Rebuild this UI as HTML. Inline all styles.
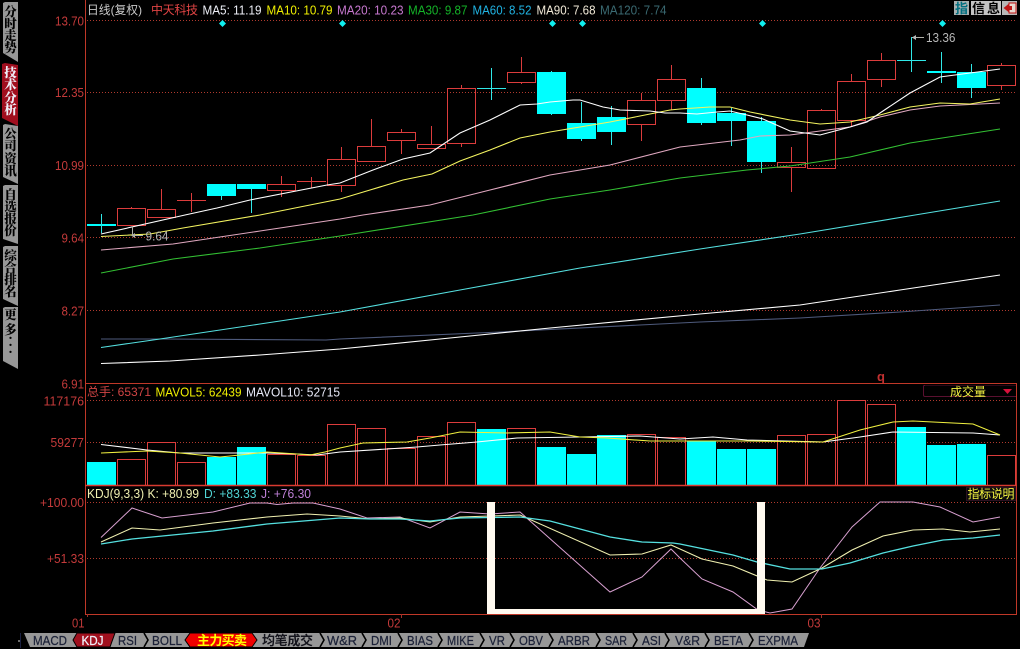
<!DOCTYPE html>
<html>
<head>
<meta charset="utf-8">
<style>
html,body{margin:0;padding:0;background:#000;width:1020px;height:649px;overflow:hidden}
svg{display:block}
text{font-family:"Liberation Sans","Noto Sans CJK SC",sans-serif;font-size:13px}
.ax{fill:#c43a3a;text-anchor:end}
.tb{font-family:"Noto Serif CJK SC","Noto Sans CJK SC",serif;font-weight:900;font-size:12.5px;text-anchor:middle;fill:#000}
.bt{fill:#1c2238;text-anchor:middle;stroke:#1c2238;stroke-width:.25px}
.cj{font-family:"Liberation Sans","Noto Sans CJK SC",sans-serif;font-size:12px}
</style>
</head>
<body>
<svg width="1020" height="649" viewBox="0 0 1020 649" xmlns="http://www.w3.org/2000/svg">
<rect width="1020" height="649" fill="#000"/>

<!-- left tabs -->
<g fill="#979797">
<polygon points="3,3 5,2 18,2 18,62 3,53"/>
<polygon points="3,125 5,124 18,126 18,184 3,177"/>
<polygon points="3,186 5,185 18,185 18,244 3,239"/>
<polygon points="3,247 5,246 18,246 18,306 3,299"/>
<polygon points="3,308 5,307 18,307 18,369 3,361"/>
</g>
<polygon points="2,64 5,63 18,65 18,126 2,118" fill="#a00e1e"/>
<g>
<text x="10.5" y="16" class="tb">分</text><text x="10.5" y="28" class="tb">时</text><text x="10.5" y="40" class="tb">走</text><text x="10.5" y="52" class="tb">势</text>
<text x="10.5" y="77" class="tb" style="fill:#eeeef8">技</text><text x="10.5" y="89" class="tb" style="fill:#eeeef8">术</text><text x="10.5" y="102" class="tb" style="fill:#eeeef8">分</text><text x="10.5" y="114" class="tb" style="fill:#eeeef8">析</text>
<text x="10.5" y="138" class="tb">公</text><text x="10.5" y="150" class="tb">司</text><text x="10.5" y="163" class="tb">资</text><text x="10.5" y="175" class="tb">讯</text>
<text x="10.5" y="199" class="tb">自</text><text x="10.5" y="211" class="tb">选</text><text x="10.5" y="223" class="tb">报</text><text x="10.5" y="235" class="tb">价</text>
<text x="10.5" y="260" class="tb">综</text><text x="10.5" y="272" class="tb">合</text><text x="10.5" y="284" class="tb">排</text><text x="10.5" y="296" class="tb">名</text>
<text x="10.5" y="319" class="tb">更</text><text x="10.5" y="334" class="tb">多</text>
<text x="10.5" y="339" class="tb">.</text><text x="10.5" y="346" class="tb">.</text><text x="10.5" y="353" class="tb">.</text>
</g>

<!-- dotted grid -->
<g stroke="#b03a2e" stroke-width="1" stroke-dasharray="1 2" fill="none" shape-rendering="crispEdges">
<path d="M87 20.5H1017M87 92.5H1017M87 165.5H1017M87 237.5H1017M87 310.5H1017M87 400.5H1017M87 442.5H1017M87 502.5H1017M87 558.5H1017"/>
</g>

<!-- frame -->
<g stroke="#c03828" stroke-width="1" fill="none" shape-rendering="crispEdges">
<path d="M85.5 0V615M85 383.5H1017M85 485.5H1017M85 614.5H1017M1016.5 383V615"/>
<path d="M401.5 614V618M821.5 614V618M87.5 614V617" stroke="#a03028"/>
</g>

<!-- candles red -->
<g fill="none" stroke="#dc3c3c" stroke-width="1" shape-rendering="crispEdges">
<rect x="117.5" y="208.5" width="28" height="17"/>
<rect x="147.5" y="209.5" width="28" height="8"/>
<rect x="267.5" y="184.5" width="28" height="6"/>
<rect x="327.5" y="159.5" width="28" height="26"/>
<rect x="357.5" y="146.5" width="28" height="15"/>
<rect x="387.5" y="132.5" width="28" height="8"/>
<rect x="417.5" y="144.5" width="28" height="4"/>
<rect x="447.5" y="88.5" width="28" height="55"/>
<rect x="507.5" y="72.5" width="28" height="10"/>
<rect x="627.5" y="100.5" width="28" height="24"/>
<rect x="657.5" y="79.5" width="28" height="21"/>
<rect x="777.5" y="162.5" width="28" height="5"/>
<rect x="807.5" y="110.5" width="28" height="58"/>
<rect x="837.5" y="81.5" width="28" height="39"/>
<rect x="867.5" y="60.5" width="28" height="19"/>
<rect x="987.5" y="65.5" width="28" height="20"/>
<path d="M131.5 207V208M161.5 189V209M177 200.5H206M191.5 193V212M281.5 176V184M281.5 191V197M297 181.5H326M311.5 177V188M341.5 147V159M341.5 186V192M371.5 119V146M401.5 129V132M401.5 141V154M431.5 126V144M461.5 85V88M461.5 144V147M521.5 57V72M521.5 83V84M641.5 93V100M641.5 125V141M671.5 65V79M671.5 101V110M791.5 147V162M791.5 168V192M821.5 109V110M851.5 74V81M851.5 121V126M881.5 53V60M881.5 80V87M1001.5 63V65M1001.5 86V90"/>
</g>
<!-- candles cyan -->
<g fill="#00ffff" shape-rendering="crispEdges">
<rect x="207" y="184" width="29" height="12"/>
<rect x="237" y="184" width="29" height="5"/>
<rect x="537" y="72" width="29" height="42"/>
<rect x="567" y="123" width="29" height="16"/>
<rect x="597" y="117" width="29" height="15"/>
<rect x="687" y="88" width="29" height="35"/>
<rect x="717" y="113" width="29" height="8"/>
<rect x="747" y="121" width="29" height="41"/>
<rect x="957" y="72" width="29" height="16"/>
<rect x="87" y="224" width="29" height="2"/>
<rect x="927" y="71" width="29" height="2"/>
</g>
<g fill="none" stroke="#30e8e8" stroke-width="1" shape-rendering="crispEdges">
<path d="M101.5 214V233M221.5 196V200M251.5 189V213M477 88.5H506M491.5 68V100M551.5 71V72M551.5 114V115M581.5 102V123M581.5 139V141M611.5 106V117M611.5 132V145M701.5 78V88M701.5 123V125M731.5 108V113M731.5 121V146M761.5 117V121M761.5 162V173M897 60.5H926M911.5 37V72M941.5 52V83M971.5 64V72M971.5 88V98"/>
</g>

<!-- diamonds -->
<g fill="#10f0f0">
<polygon points="222.5,20 226,23.5 222.5,27 219,23.5"/>
<polygon points="342.5,20 346,23.5 342.5,27 339,23.5"/>
<polygon points="552.5,20 556,23.5 552.5,27 549,23.5"/>
<polygon points="582.5,20 586,23.5 582.5,27 579,23.5"/>
<polygon points="762.5,20 766,23.5 762.5,27 759,23.5"/>
<polygon points="942.5,20 946,23.5 942.5,27 939,23.5"/>
</g>

<!-- MA lines -->
<g fill="none" stroke-width="1.1">
<polyline stroke="#4e5a7c" points="101,339 160,339 326,340 340,339 500,332 700,322 800,318 900,312 1000,305"/>
<polyline stroke="#ffffff" points="101,363.5 170,361 260,355 340,349 450,338 550,328 700,314 800,305 900,290 1000,275"/>
<polyline stroke="#55e0e0" points="101,347.5 160,339 260,324 340,312 460,290 580,268 700,249 800,234 915,215 1000,201"/>
<polyline stroke="#33c033" points="101,273 173,259 260,248 340,236 473,215 550,199 610,190 680,178 747,170 790,166 850,157 910,143 1000,129"/>
<polyline stroke="#e0a8c0" points="101,250 173,244 260,231 340,219 363,215 430,205 490,190 550,175 610,165 680,147 740,140 760,136 790,135 820,131 850,127 880,117 910,110 940,106 1000,103"/>
<polyline stroke="#f4f460" points="101,236.5 150,234 183,228 260,215 340,199 370,190 403,180 432,174 460,161 490,150 520,138 550,132 580,127 610,122 640,116 670,110 680,109 710,107 730,107 750,112 790,120 820,124 850,122 880,115 910,107 940,103 970,104 1000,99"/>
<polyline stroke="#ffffff" points="101,234 185,215 217,208 250,200 327,185 340,183 373,170 403,159 430,153 460,133 490,120 520,105 537,104 550,102 573,100 580,100 603,107 620,110 650,111 665,113 680,113 697,114 717,112 730,111 747,115 763,119 790,131 820,135 850,127 867,122 880,113 910,93 940,77 970,73 1000,69"/>
</g>

<!-- price annotations -->
<g fill="none" stroke="#b0b0a8" stroke-width="1" shape-rendering="crispEdges"><path d="M132.5 226V236M133 235.5H143"/><path d="M912 37.5H924"/></g>
<polygon points="131,235.5 135,233 135,238" fill="#b0b0a8"/>
<polygon points="912,37.5 916,35 916,40" fill="#b8b8b8"/>
<text x="145.5" y="240.5" fill="#b4b4b4" textLength="23" lengthAdjust="spacingAndGlyphs">9.64</text>
<text x="926" y="42" fill="#b8b8b8" textLength="29.5" lengthAdjust="spacingAndGlyphs">13.36</text>

<!-- Axis labels -->
<g>
<text class="ax" x="84" y="25.5" textLength="29" lengthAdjust="spacingAndGlyphs">13.70</text>
<text class="ax" x="84" y="97" textLength="29" lengthAdjust="spacingAndGlyphs">12.35</text>
<text class="ax" x="84" y="170" textLength="29" lengthAdjust="spacingAndGlyphs">10.99</text>
<text class="ax" x="84" y="242.5" textLength="22.5" lengthAdjust="spacingAndGlyphs">9.64</text>
<text class="ax" x="84" y="315.5" textLength="22.5" lengthAdjust="spacingAndGlyphs">8.27</text>
<text class="ax" x="84" y="388.5" textLength="22.5" lengthAdjust="spacingAndGlyphs">6.91</text>
<text class="ax" x="84" y="405.5" textLength="40.5" lengthAdjust="spacingAndGlyphs">117176</text>
<text class="ax" x="84" y="447" textLength="33.5" lengthAdjust="spacingAndGlyphs">59277</text>
<text class="ax" x="84" y="507" textLength="44" lengthAdjust="spacingAndGlyphs">+100.00</text>
<text class="ax" x="84" y="563" textLength="37" lengthAdjust="spacingAndGlyphs">+51.33</text>
<text class="ax" x="84.5" y="627.5" textLength="12.5" lengthAdjust="spacingAndGlyphs">01</text>
<text class="ax" x="400.5" y="627.5" textLength="13" lengthAdjust="spacingAndGlyphs">02</text>
<text class="ax" x="820.5" y="627.5" textLength="13" lengthAdjust="spacingAndGlyphs">03</text>
</g>

<!-- header -->
<text class="cj" x="87" y="14" fill="#c8c8c8" textLength="55" lengthAdjust="spacingAndGlyphs">日线(复权)</text>
<text class="cj" x="151" y="14" fill="#e04444" textLength="47">中天科技</text>
<text x="202.5" y="14.5" fill="#eef0f8" textLength="59" lengthAdjust="spacingAndGlyphs">MA5: 11.19</text>
<text x="266.5" y="14.5" fill="#f0f000" textLength="66" lengthAdjust="spacingAndGlyphs">MA10: 10.79</text>
<text x="337" y="14.5" fill="#c878d0" textLength="66.5" lengthAdjust="spacingAndGlyphs">MA20: 10.23</text>
<text x="408" y="14.5" fill="#14b428" textLength="59.5" lengthAdjust="spacingAndGlyphs">MA30: 9.87</text>
<text x="472.5" y="14.5" fill="#20b4e4" textLength="59" lengthAdjust="spacingAndGlyphs">MA60: 8.52</text>
<text x="536.5" y="14.5" fill="#f2ead8" textLength="59" lengthAdjust="spacingAndGlyphs">MA90: 7.68</text>
<text x="600" y="14.5" fill="#3a6a72" textLength="66.5" lengthAdjust="spacingAndGlyphs">MA120: 7.74</text>

<!-- top right buttons -->
<rect x="954" y="1" width="15" height="14" fill="#a8b0b0"/>
<text x="961.5" y="13" text-anchor="middle" class="cj" style="font-weight:700;font-size:13px;fill:#006f80">指</text>
<rect x="971" y="1" width="30" height="14" fill="#c4c4c4"/>
<text x="986" y="13" text-anchor="middle" class="cj" style="font-weight:700;font-size:13px;fill:#000" textLength="28">信息</text>
<rect x="1002" y="1" width="15" height="14" fill="#b8b8b8"/>
<rect x="1009" y="3" width="7" height="10" fill="#e8d8d0" stroke="#c01010" stroke-width="1"/>
<polygon points="1003.5,8 1008.5,4 1008.5,6 1012,6 1012,10 1008.5,10 1008.5,12" fill="#c01818"/>

<text x="881" y="381" text-anchor="middle" fill="#c03030" style="font-weight:700">q</text>

<!-- vol header -->
<text class="cj" x="87" y="396" fill="#d04444" textLength="64" lengthAdjust="spacingAndGlyphs">总手: 65371</text>
<text x="155.5" y="396.5" fill="#f0f000" textLength="86" lengthAdjust="spacingAndGlyphs">MAVOL5: 62439</text>
<text x="246" y="396.5" fill="#e8eaf8" textLength="94" lengthAdjust="spacingAndGlyphs">MAVOL10: 52715</text>
<path d="M926 385.5H924Q923.5 385.5 923.5 387V395Q923.5 396.5 925 396.5H1016" fill="none" stroke="#5a1030" stroke-width="1"/>
<path d="M925 385.5H1016" stroke="#2c0818" fill="none"/>
<text class="cj" x="968" y="396" text-anchor="middle" fill="#f0f040" textLength="36">成交量</text>
<polygon points="1003,389 1012,389 1007.5,394" fill="#d8103c"/>

<!-- volume bars -->
<g fill="#00ffff" shape-rendering="crispEdges">
<rect x="87" y="462" width="29" height="23"/>
<rect x="207" y="457" width="29" height="28"/>
<rect x="237" y="447" width="29" height="38"/>
<rect x="477" y="429" width="29" height="56"/>
<rect x="537" y="447" width="29" height="38"/>
<rect x="567" y="454" width="29" height="31"/>
<rect x="597" y="435" width="29" height="50"/>
<rect x="687" y="441" width="29" height="44"/>
<rect x="717" y="449" width="29" height="36"/>
<rect x="747" y="449" width="29" height="36"/>
<rect x="897" y="427" width="29" height="58"/>
<rect x="927" y="445" width="29" height="40"/>
<rect x="957" y="444" width="29" height="41"/>
</g>
<g fill="none" stroke="#dc3c3c" shape-rendering="crispEdges">
<rect x="117.5" y="459.5" width="28" height="26"/>
<rect x="147.5" y="442.5" width="28" height="43"/>
<rect x="177.5" y="462.5" width="28" height="23"/>
<rect x="267.5" y="454.5" width="28" height="31"/>
<rect x="297.5" y="455.5" width="28" height="30"/>
<rect x="327.5" y="424.5" width="28" height="61"/>
<rect x="357.5" y="428.5" width="28" height="57"/>
<rect x="387.5" y="448.5" width="28" height="37"/>
<rect x="417.5" y="436.5" width="28" height="49"/>
<rect x="447.5" y="422.5" width="28" height="63"/>
<rect x="507.5" y="428.5" width="28" height="57"/>
<rect x="627.5" y="434.5" width="28" height="51"/>
<rect x="657.5" y="437.5" width="28" height="48"/>
<rect x="777.5" y="435.5" width="28" height="50"/>
<rect x="807.5" y="434.5" width="28" height="51"/>
<rect x="837.5" y="400.5" width="28" height="85"/>
<rect x="867.5" y="404.5" width="28" height="81"/>
<rect x="987.5" y="455.5" width="28" height="30"/>
</g>
<path d="M85 485.5H1017" stroke="#d83a30" stroke-width="1.6" fill="none"/>
<g fill="none" stroke-width="1.1">
<polyline stroke="#ffffff" points="101,444.5 147,450 180,453 267,453 297,454 317,455 340,452 387,449 417,447 440,445 477,442 517,438 580,437 640,436 680,439 713,437 747,440 823,442 860,437 893,432 973,433 1000,435"/>
<polyline stroke="#f0f040" points="101,453 147,451 180,453 220,457 240,455 267,452 297,454 310,455 325,452 340,448 363,443 407,442 430,438 460,432 507,433 550,432 580,437 607,438 650,441 680,441 713,441 747,441 823,442 860,430 893,422 913,421 973,424 1000,435"/>
</g>

<!-- KDJ header -->
<text x="87" y="498" fill="#f0f0b0" textLength="112" lengthAdjust="spacingAndGlyphs">KDJ(9,3,3) K: +80.99</text>
<text x="204" y="498" fill="#50d4d4" textLength="52.5" lengthAdjust="spacingAndGlyphs">D: +83.33</text>
<text x="261" y="498" fill="#c080d8" textLength="50" lengthAdjust="spacingAndGlyphs">J: +76.30</text>
<rect x="966.5" y="487.5" width="49" height="13" fill="#0c0a0c" stroke="#2a1020"/>
<text class="cj" x="991" y="498" text-anchor="middle" fill="#f4f440" textLength="47">指标说明</text>

<!-- KDJ lines -->
<g fill="none" stroke-width="1">
<polyline stroke="#d8a0d0" points="101,537.5 132,508 162,518 213,512 250,503 267,503 277,504.5 293,503 313,503 340,509 367,518 400,517 430,528 460,512 490,514 520,512 610,592 642,577 671,549 680,558 702,579 733,592 758,610 770,613 792,609 820,568 852,527 880,502 913,502 940,507 973,522 1000,517"/>
<polyline stroke="#f0f0b0" stroke-width="1.1" points="101,542 132,528 160,530 213,523 267,517 307,514 340,516 370,519 400,518 430,522 460,517 520,515 610,555 642,554 671,545 680,549 702,559 733,566 767,580 792,582 822,568 852,550 883,536 913,530 943,529 970,532 1000,529"/>
<polyline stroke="#55e0e0" stroke-width="1.3" points="101,544 132,539 213,531 267,524 340,518 370,519 400,519 430,521 460,518 520,517 550,521 610,537 642,542 673,543 680,544 733,555 757,562 790,569 822,569 850,563 883,553 913,546 943,540 973,538 1000,535"/>
</g>

<!-- white U overlay -->
<g fill="#fffaf0" shape-rendering="crispEdges">
<rect x="487" y="502" width="8" height="112"/>
<rect x="757" y="502" width="8" height="112"/>
<rect x="487" y="609" width="278" height="5"/>
</g>

<!-- bottom tabs -->
<polygon points="24,633 809,633 804,647 30,647" fill="#979797"/>
<g fill="none" stroke="#000" stroke-width="1.6">
<path d="M144 633L148 640L144 647M320 633L324 640L320 647M362 633L366 640L362 647M398 633L402 640L398 647M438 633L442 640L438 647M480 633L484 640L480 647M510 633L514 640L510 647M549 633L553 640L549 647M596 633L600 640L596 647M633 633L637 640L633 647M665 633L669 640L665 647M705 633L709 640L705 647M749 633L753 640L749 647"/>
</g>
<polygon points="77,633 115,633 110,647 77,647 73,640" fill="#a0101e" stroke="#000" stroke-width="1"/>
<polygon points="190,633 252,633 257,640 252,647 190,647 185,640" fill="#f00000" stroke="#000" stroke-width="1"/>
<path d="M18 641H20" stroke="#ddd" fill="none"/><path d="M20.5 633V648" stroke="#1a2040" fill="none"/>
<g>
<text class="bt" x="50" y="645" textLength="34" lengthAdjust="spacingAndGlyphs">MACD</text>
<text class="bt" x="92.5" y="645" textLength="22" lengthAdjust="spacingAndGlyphs" style="fill:#eeeef8;stroke:#eeeef8">KDJ</text>
<text class="bt" x="127.5" y="645" textLength="19" lengthAdjust="spacingAndGlyphs">RSI</text>
<text class="bt" x="167" y="645" textLength="30" lengthAdjust="spacingAndGlyphs">BOLL</text>
<text class="cj" x="222" y="645" text-anchor="middle" textLength="50" style="font-weight:700;font-size:13px;fill:#ffff00">主力买卖</text>
<text class="cj" x="287.5" y="645" text-anchor="middle" textLength="51" style="font-weight:700;font-size:13px;fill:#14141c">均笔成交</text>
<text class="bt" x="342" y="645" textLength="30" lengthAdjust="spacingAndGlyphs">W&amp;R</text>
<text class="bt" x="381.5" y="645" textLength="21" lengthAdjust="spacingAndGlyphs">DMI</text>
<text class="bt" x="420" y="645" textLength="26" lengthAdjust="spacingAndGlyphs">BIAS</text>
<text class="bt" x="460.5" y="645" textLength="27" lengthAdjust="spacingAndGlyphs">MIKE</text>
<text class="bt" x="497" y="645" textLength="16" lengthAdjust="spacingAndGlyphs">VR</text>
<text class="bt" x="531" y="645" textLength="24" lengthAdjust="spacingAndGlyphs">OBV</text>
<text class="bt" x="574" y="645" textLength="32" lengthAdjust="spacingAndGlyphs">ARBR</text>
<text class="bt" x="616" y="645" textLength="22" lengthAdjust="spacingAndGlyphs">SAR</text>
<text class="bt" x="651.5" y="645" textLength="19" lengthAdjust="spacingAndGlyphs">ASI</text>
<text class="bt" x="687.5" y="645" textLength="25" lengthAdjust="spacingAndGlyphs">V&amp;R</text>
<text class="bt" x="728.5" y="645" textLength="29" lengthAdjust="spacingAndGlyphs">BETA</text>
<text class="bt" x="778" y="645" textLength="40" lengthAdjust="spacingAndGlyphs">EXPMA</text>
</g>
</svg>
</body>
</html>
